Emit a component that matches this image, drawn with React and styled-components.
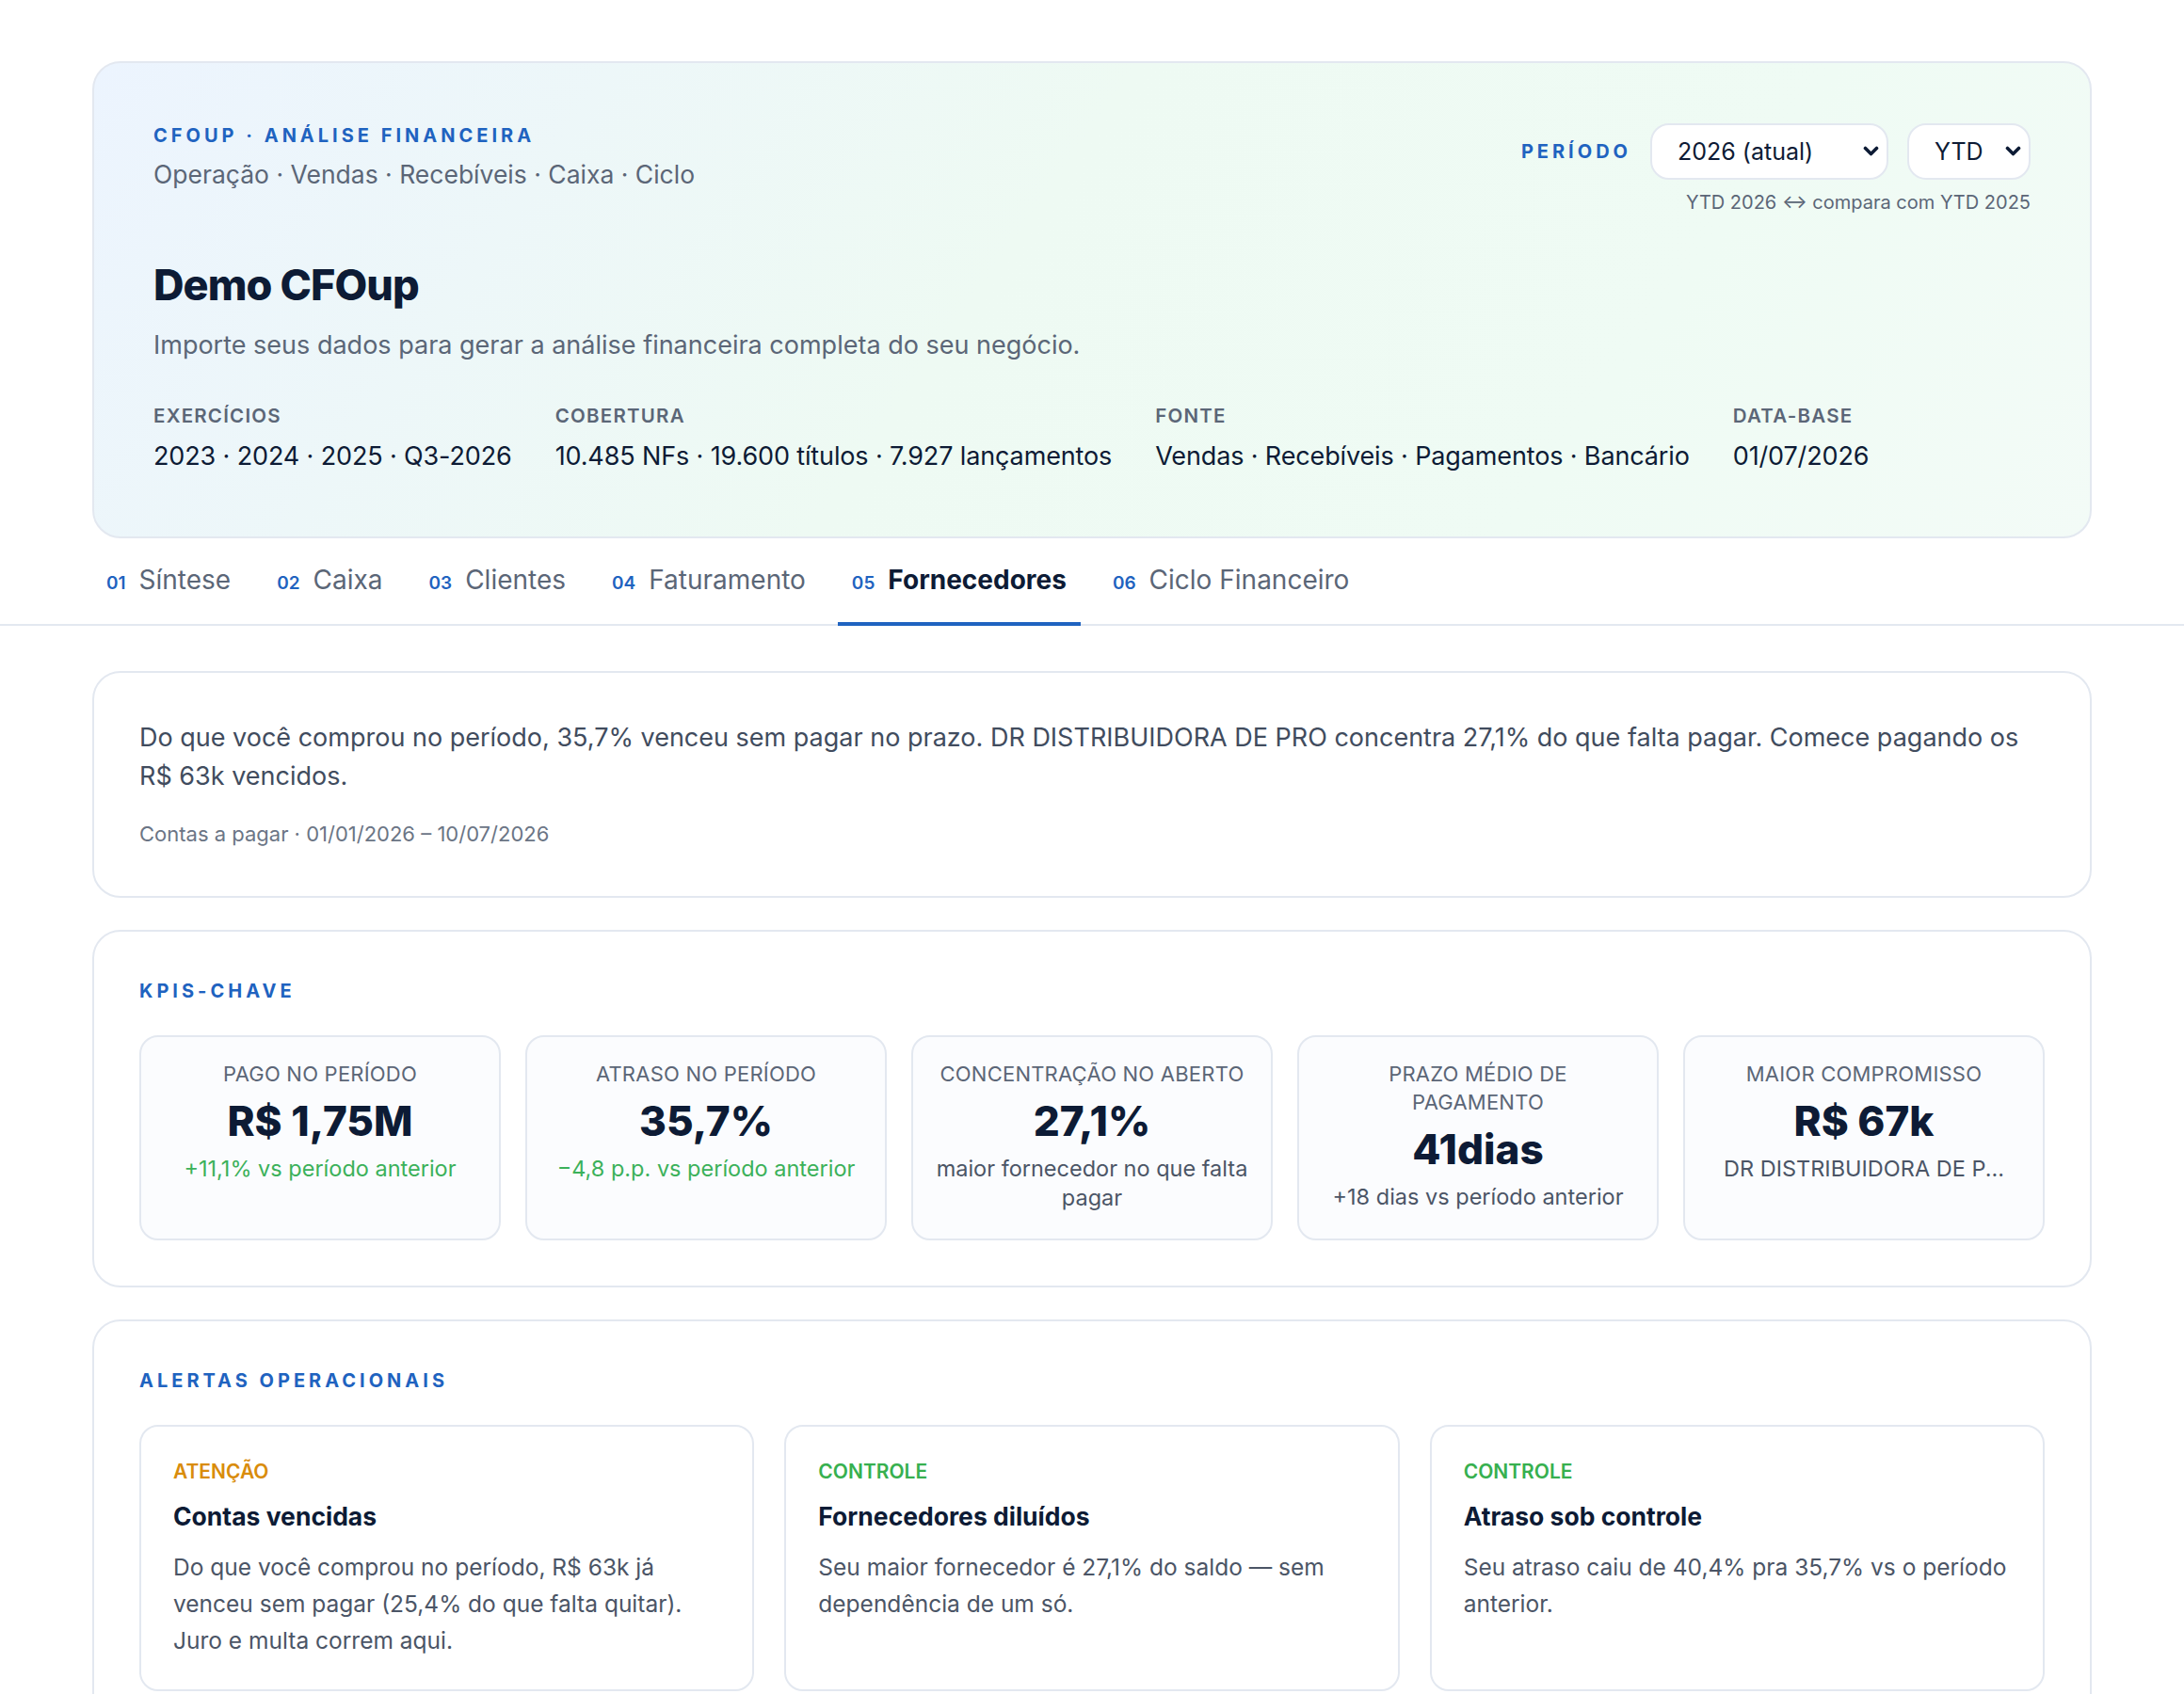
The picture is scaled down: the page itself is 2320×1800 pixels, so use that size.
import styled, { createGlobalStyle } from 'styled-components';

const GlobalStyle = createGlobalStyle`
  html, body {
    margin: 0;
    padding: 0;
    background: #ffffff;
  }

  body {
    font-family: Inter, 'Open Sans', 'Liberation Sans', sans-serif;
    color: #0d1b35;
    -webkit-font-smoothing: antialiased;
  }

  * {
    box-sizing: border-box;
  }
`;

const blue = '#1f63c0';
const navy = '#0d1b35';
const slate = '#5b6677';
const line = '#e3e8f0';

const tabs = [
  { n: '01', label: 'Síntese' },
  { n: '02', label: 'Caixa' },
  { n: '03', label: 'Clientes' },
  { n: '04', label: 'Faturamento' },
  { n: '05', label: 'Fornecedores', active: true },
  { n: '06', label: 'Ciclo Financeiro' },
];

const meta = [
  { label: 'Exercícios', value: '2023 · 2024 · 2025 · Q3-2026' },
  { label: 'Cobertura', value: '10.485 NFs · 19.600 títulos · 7.927 lançamentos' },
  { label: 'Fonte', value: 'Vendas · Recebíveis · Pagamentos · Bancário' },
  { label: 'Data-base', value: '01/07/2026' },
];

const kpis = [
  { label: 'Pago no período', value: 'R$ 1,75M', note: '+11,1% vs período anterior', tone: 'good' },
  { label: 'Atraso no período', value: '35,7%', note: '−4,8 p.p. vs período anterior', tone: 'good' },
  { label: 'Concentração no aberto', value: '27,1%', note: 'maior fornecedor no que falta pagar' },
  { label: 'Prazo médio de pagamento', value: '41dias', note: '+18 dias vs período anterior' },
  { label: 'Maior compromisso', value: 'R$ 67k', note: 'DR DISTRIBUIDORA DE P...' },
];

const alerts = [
  {
    tag: 'Atenção',
    tone: 'warn',
    title: 'Contas vencidas',
    body: 'Do que você comprou no período, R$ 63k já venceu sem pagar (25,4% do que falta quitar). Juro e multa correm aqui.',
  },
  {
    tag: 'Controle',
    tone: 'ok',
    title: 'Fornecedores diluídos',
    body: 'Seu maior fornecedor é 27,1% do saldo — sem dependência de um só.',
  },
  {
    tag: 'Controle',
    tone: 'ok',
    title: 'Atraso sob controle',
    body: 'Seu atraso caiu de 40,4% pra 35,7% vs o período anterior.',
  },
];

// small heavy caret used by the period pickers
const Caret = () => (
  <svg width='17' height='12' viewBox='0 0 17 12' fill='none'>
    <path d='M2.5 2.5 L8.5 8.5 L14.5 2.5' stroke={navy} strokeWidth='3.6' strokeLinecap='round' strokeLinejoin='round' />
  </svg>
);

const App = () => {
  return (
    <Page>
      <GlobalStyle />
      <Wrap>
        <Hero>
          <HeroTop>
            <div>
              <Eyebrow>CFOup · Análise financeira</Eyebrow>
              <Tagline>Operação · Vendas · Recebíveis · Caixa · Ciclo</Tagline>
            </div>
            <PeriodBlock>
              <PeriodRow>
                <Eyebrow as='span'>Período</Eyebrow>
                <SelectBox $width={253}>
                  <span>2026 (atual)</span>
                  <Caret />
                </SelectBox>
                <SelectBox $width={131}>
                  <span>YTD</span>
                  <Caret />
                </SelectBox>
              </PeriodRow>
              <Caption>YTD 2026 ↔ compara com YTD 2025</Caption>
            </PeriodBlock>
          </HeroTop>

          <Title>Demo CFOup</Title>
          <Lead>Importe seus dados para gerar a análise financeira completa do seu negócio.</Lead>

          <MetaRow>
            {meta.map((m) => (
              <div key={m.label}>
                <MetaLabel>{m.label}</MetaLabel>
                <MetaValue>{m.value}</MetaValue>
              </div>
            ))}
          </MetaRow>
        </Hero>
      </Wrap>

      <TabBar>
        <TabList>
          {tabs.map((t) => (
            <Tab key={t.n} $active={t.active}>
              <TabNum>{t.n}</TabNum>
              {t.label}
            </Tab>
          ))}
        </TabList>
      </TabBar>

      <Content>
        <Panel $bottom={51}>
          <Summary>
            Do que você comprou no período, 35,7% venceu sem pagar no prazo. DR DISTRIBUIDORA DE PRO concentra 27,1% do
            que falta pagar. Comece pagando os R$ 63k vencidos.
          </Summary>
          <SummaryFoot>Contas a pagar · 01/01/2026 – 10/07/2026</SummaryFoot>
        </Panel>

        <Panel>
          <SectionLabel>KPIs-chave</SectionLabel>
          <KpiGrid>
            {kpis.map((k) => (
              <KpiTile key={k.label}>
                <KpiLabel>{k.label}</KpiLabel>
                <KpiValue>{k.value}</KpiValue>
                <KpiNote $tone={k.tone}>{k.note}</KpiNote>
              </KpiTile>
            ))}
          </KpiGrid>
        </Panel>

        <Panel>
          <SectionLabel>Alertas operacionais</SectionLabel>
          <AlertGrid>
            {alerts.map((a) => (
              <AlertCard key={a.title}>
                <AlertTag $tone={a.tone}>{a.tag}</AlertTag>
                <AlertTitle>{a.title}</AlertTitle>
                <AlertBody>{a.body}</AlertBody>
              </AlertCard>
            ))}
          </AlertGrid>
        </Panel>
      </Content>
    </Page>
  );
};

export default App;

const Page = styled.div`
  padding: 65px 0 64px;
`;

const Wrap = styled.div`
  padding: 0 98px;
`;

const Hero = styled.section`
  padding: 64px 63px 68px;
  border: 2px solid ${line};
  border-radius: 30px;
  background: linear-gradient(125deg, #ecf4fe 0%, #eefaf3 45%, #effbf4 75%, #f3fbf7 100%);
`;

const HeroTop = styled.div`
  display: flex;
  justify-content: space-between;
  align-items: flex-start;
`;

const Eyebrow = styled.div`
  display: block;
  color: ${blue};
  font-size: 20px;
  font-weight: 700;
  line-height: 26px;
  letter-spacing: 0.2em;
  text-transform: uppercase;
`;

const Tagline = styled.div`
  margin-top: 11px;
  color: ${slate};
  font-size: 26.5px;
  line-height: 34px;
`;

const PeriodBlock = styled.div`
  display: flex;
  flex-direction: column;
  align-items: flex-end;
`;

const PeriodRow = styled.div`
  display: flex;
  align-items: center;
  gap: 20px;
`;

const SelectBox = styled.div`
  display: flex;
  justify-content: space-between;
  align-items: center;
  width: ${({ $width }) => $width}px;
  height: 60px;
  padding: 0 8px 0 27px;
  border: 2px solid ${line};
  border-radius: 20px;
  background: #ffffff;
  color: ${navy};
  font-size: 25px;
`;

const Caption = styled.div`
  margin-top: 12px;
  color: ${slate};
  font-size: 20px;
  line-height: 24px;
`;

const Title = styled.h1`
  margin: 49px 0 0;
  color: ${navy};
  font-size: 45px;
  font-weight: 800;
  line-height: 53px;
  letter-spacing: -0.02em;
`;

const Lead = styled.p`
  margin: 20px 0 0;
  color: ${slate};
  font-size: 27px;
  line-height: 36px;
`;

const MetaRow = styled.div`
  display: flex;
  gap: 46px;
  margin-top: 44px;
`;

const MetaLabel = styled.div`
  color: ${slate};
  font-size: 20.5px;
  font-weight: 600;
  line-height: 26px;
  letter-spacing: 0.06em;
  text-transform: uppercase;
`;

const MetaValue = styled.div`
  margin-top: 13px;
  color: ${navy};
  font-size: 27px;
  line-height: 34px;
  letter-spacing: -0.005em;
`;

const TabBar = styled.nav`
  margin-top: 8px;
  border-bottom: 2px solid ${line};
`;

const TabList = styled.div`
  display: flex;
  gap: 19px;
  padding: 0 98px;
`;

const Tab = styled.div`
  display: flex;
  align-items: baseline;
  gap: 14px;
  margin-bottom: -2px;
  padding: 18px 15px 23px;
  border-bottom: 4px solid ${({ $active }) => ($active ? blue : 'transparent')};
  color: ${({ $active }) => ($active ? navy : slate)};
  font-size: 28px;
  font-weight: ${({ $active }) => ($active ? 700 : 400)};
  line-height: 36px;
`;

const TabNum = styled.span`
  color: ${blue};
  font-size: 19px;
  font-weight: 600;
`;

const Content = styled.main`
  display: flex;
  flex-direction: column;
  gap: 34px;
  margin-top: 48px;
  padding: 0 98px;
`;

const Panel = styled.section`
  padding: 48px 48px ${({ $bottom }) => $bottom || 48}px;
  border: 2px solid ${line};
  border-radius: 30px;
  background: #ffffff;
`;

const Summary = styled.p`
  margin: 0;
  color: #414c5e;
  font-size: 27px;
  line-height: 41px;
`;

const SummaryFoot = styled.div`
  margin-top: 26px;
  color: #6b7585;
  font-size: 22px;
  line-height: 30px;
`;

const SectionLabel = styled.div`
  margin-bottom: 32px;
  color: ${blue};
  font-size: 20px;
  font-weight: 700;
  line-height: 30px;
  letter-spacing: 0.2em;
  text-transform: uppercase;
`;

const KpiGrid = styled.div`
  display: grid;
  grid-template-columns: repeat(5, 1fr);
  gap: 26px;
`;

const KpiTile = styled.div`
  padding: 24px 24px 28px;
  border: 2px solid ${line};
  border-radius: 20px;
  background: #fbfcfe;
  text-align: center;
`;

const KpiLabel = styled.div`
  color: ${slate};
  font-size: 22px;
  line-height: 30px;
  letter-spacing: 0.01em;
  text-transform: uppercase;
`;

const KpiValue = styled.div`
  margin: 10px 0;
  color: ${navy};
  font-size: 44px;
  font-weight: 800;
  line-height: 50px;
`;

const KpiNote = styled.div`
  color: ${({ $tone }) => ($tone === 'good' ? '#3bb15a' : '#4b5566')};
  font-size: 23.5px;
  line-height: 31px;
`;

const AlertGrid = styled.div`
  display: grid;
  grid-template-columns: repeat(3, 1fr);
  gap: 32px;
`;

const AlertCard = styled.div`
  padding: 34px 24px 32px 34px;
  border: 2px solid ${line};
  border-radius: 20px;
  background: #ffffff;
`;

const AlertTag = styled.div`
  color: ${({ $tone }) => ($tone === 'warn' ? '#d98c0b' : '#37b04f')};
  font-size: 21px;
  font-weight: 600;
  line-height: 28px;
  text-transform: uppercase;
`;

const AlertTitle = styled.div`
  margin-top: 15px;
  color: ${navy};
  font-size: 26.5px;
  font-weight: 700;
  line-height: 36px;
`;

const AlertBody = styled.p`
  margin: 17px 0 0;
  color: #4b5566;
  font-size: 24.5px;
  line-height: 39px;
`;
